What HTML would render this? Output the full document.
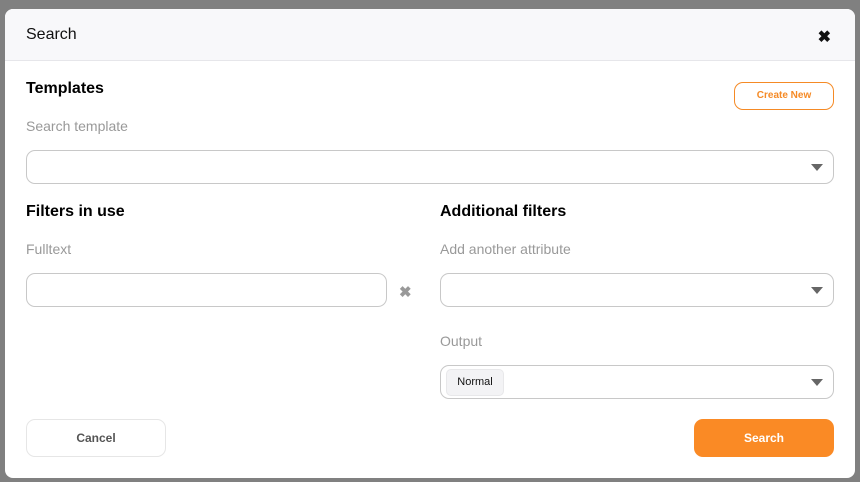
<!DOCTYPE html>
<html><head><style>
body{margin:0;width:860px;height:482px;background:#808080;font-family:"Liberation Sans",sans-serif;position:relative;overflow:hidden}
.m{position:absolute;left:5px;top:9px;width:850px;height:469px;background:#fff;border-radius:8px;overflow:hidden}
.h{height:51px;background:#f8f8fa;border-bottom:1px solid #e6e6ea;position:relative}
.h span{position:absolute;left:21px;top:17px;font-size:16px;color:#111}
.x{position:absolute;right:24px;top:18px;font-size:16px;font-weight:bold;color:#111}
.a{position:absolute}
.t{font-size:16px;font-weight:bold;color:#000}
.l{font-size:14px;color:#999}
.in{position:absolute;border:1px solid #c8c8c8;border-radius:9px;height:32px;background:#fff}
.car{position:absolute;right:10px;top:13px;width:0;height:0;border-left:6px solid transparent;border-right:6px solid transparent;border-top:7px solid #666}
.btn{position:absolute;border-radius:9px;font-size:12px;font-weight:bold;text-align:center}
</style></head><body>
<div class="m">
<div class="h"><span>Search</span><div class="x">✖</div></div>
<div class="a t" style="left:21px;top:71px">Templates</div>
<div class="btn" style="left:729px;top:73px;width:98px;height:26px;line-height:26px;border:1px solid #f58a25;color:#f58a25;font-size:10px">Create New</div>
<div class="a l" style="left:21px;top:109px">Search template</div>
<div class="in" style="left:21px;top:141px;width:806px"><div class="car"></div></div>
<div class="a t" style="left:21px;top:194px">Filters in use</div>
<div class="a l" style="left:21px;top:232px">Fulltext</div>
<div class="in" style="left:21px;top:264px;width:359px"></div>
<div class="a" style="left:394px;top:274px;color:#999;font-size:15px;font-weight:bold">✖</div>
<div class="a t" style="left:435px;top:194px">Additional filters</div>
<div class="a l" style="left:435px;top:232px">Add another attribute</div>
<div class="in" style="left:435px;top:264px;width:392px"><div class="car"></div></div>
<div class="a l" style="left:435px;top:324px">Output</div>
<div class="in" style="left:435px;top:356px;width:392px"><div style="position:absolute;left:5px;top:3px;width:56px;height:25px;line-height:25px;background:#f3f3f5;border:1px solid #e8e8ea;border-radius:5px;font-size:11px;text-align:center;color:#111">Normal</div><div class="car"></div></div>
<div class="btn" style="left:21px;top:410px;width:138px;height:36px;line-height:36px;border:1px solid #e6e6e6;color:#555">Cancel</div>
<div class="btn" style="left:689px;top:410px;width:140px;height:38px;line-height:38px;background:#fa8a25;color:#fff">Search</div>
</div>
</body></html>
